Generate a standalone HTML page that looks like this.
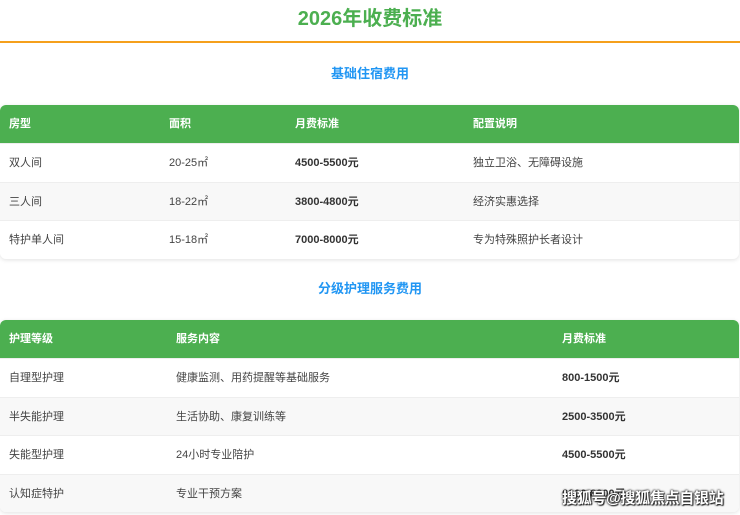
<!DOCTYPE html>
<html><head><meta charset="utf-8"><style>
*{margin:0;padding:0;box-sizing:border-box}
body{width:740px;height:515px;overflow:hidden;background:#fff;font-family:"Liberation Sans","Noto Sans CJK SC",sans-serif;position:relative}
h1{position:absolute;top:6px;left:0;width:740px;text-align:center;color:#4caf50;font-size:20px;font-weight:bold;line-height:26px}
.line{position:absolute;top:41px;left:0;width:740px;height:2px;background:#f5a01c}
h2{position:absolute;left:0;width:740px;text-align:center;color:#2196f3;font-size:13px;font-weight:bold;line-height:18px}
.tbl{position:absolute;left:0;width:739px;border-radius:6px;overflow:hidden;box-shadow:0 1px 4px rgba(0,0,0,.12)}
.row{position:relative;height:38.6px;font-size:11px;color:#444;line-height:38.6px}
.row span{position:absolute;top:0}
.hd{background:#4caf50;color:#fff;font-weight:bold;height:38px;line-height:38px}
.alt{background:#f8f8f8}
.row:not(.hd){border-top:1px solid #eee}
b{color:#333}
.wm{position:absolute;left:562px;top:487px;font-size:15px;font-weight:bold;color:#fff;text-shadow:0 0 2px #222,0 0 2px #222,1px 1px 1px #222;letter-spacing:-0.3px}
</style></head><body>
<h1>2026年收费标准</h1>
<div class="line"></div>
<h2 style="top:65px">基础住宿费用</h2>
<div class="tbl" style="top:105px">
<div class="row hd"><span style="left:9px">房型</span><span style="left:169px">面积</span><span style="left:295px">月费标准</span><span style="left:473px">配置说明</span></div>
<div class="row"><span style="left:9px">双人间</span><span style="left:169px">20-25㎡</span><span style="left:295px"><b>4500-5500元</b></span><span style="left:473px">独立卫浴、无障碍设施</span></div>
<div class="row alt"><span style="left:9px">三人间</span><span style="left:169px">18-22㎡</span><span style="left:295px"><b>3800-4800元</b></span><span style="left:473px">经济实惠选择</span></div>
<div class="row"><span style="left:9px">特护单人间</span><span style="left:169px">15-18㎡</span><span style="left:295px"><b>7000-8000元</b></span><span style="left:473px">专为特殊照护长者设计</span></div>
</div>
<h2 style="top:280px">分级护理服务费用</h2>
<div class="tbl" style="top:320px">
<div class="row hd"><span style="left:9px">护理等级</span><span style="left:176px">服务内容</span><span style="left:562px">月费标准</span></div>
<div class="row"><span style="left:9px">自理型护理</span><span style="left:176px">健康监测、用药提醒等基础服务</span><span style="left:562px"><b>800-1500元</b></span></div>
<div class="row alt"><span style="left:9px">半失能护理</span><span style="left:176px">生活协助、康复训练等</span><span style="left:562px"><b>2500-3500元</b></span></div>
<div class="row"><span style="left:9px">失能型护理</span><span style="left:176px">24小时专业陪护</span><span style="left:562px"><b>4500-5500元</b></span></div>
<div class="row alt"><span style="left:9px">认知症特护</span><span style="left:176px">专业干预方案</span><span style="left:562px"><b>6000-8000元</b></span></div>
</div>
<div class="wm">搜狐号@搜狐焦点自银站</div>
</body></html>
